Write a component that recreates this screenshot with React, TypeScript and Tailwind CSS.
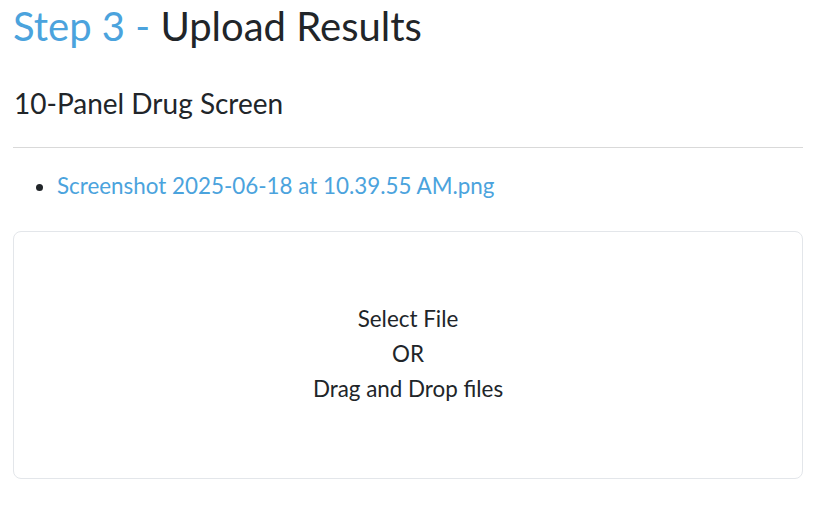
import React from "react";

export default function App() {
  return (
    <div className="w-[825px] h-[514px] bg-white px-[13px] pt-[2px] text-[#212529]" style={{ fontFamily: "Lato, 'Open Sans', sans-serif" }}>
      <h1 className="text-[40px] leading-[48px] font-normal">
        <span className="text-[#4ba3dd]">Step 3 - </span>
        <span>Upload Results</span>
      </h1>
      <h2 className="mt-[35px] text-[28px] leading-[36px] font-normal px-[1px]">10-Panel Drug Screen</h2>
      <hr className="mt-[26px] mr-[9px] border-t border-[#d9d9d9]" />
      <ul className="mt-[23px] list-disc pl-[44px] text-[22.4px] leading-[30px] marker:text-[#212529]">
        <li>
          <a className="text-[#4ba3dd]" href="#">Screenshot 2025-06-18 at 10.39.55 AM.png</a>
        </li>
      </ul>
      <div className="mt-[30px] mr-[9px] h-[248px] rounded-[8px] border border-[#e3e6ea] flex flex-col items-center justify-center text-[22.4px] leading-[35px] pb-[4px]">
        <div>Select File</div>
        <div>OR</div>
        <div>Drag and Drop files</div>
      </div>
    </div>
  );
}
